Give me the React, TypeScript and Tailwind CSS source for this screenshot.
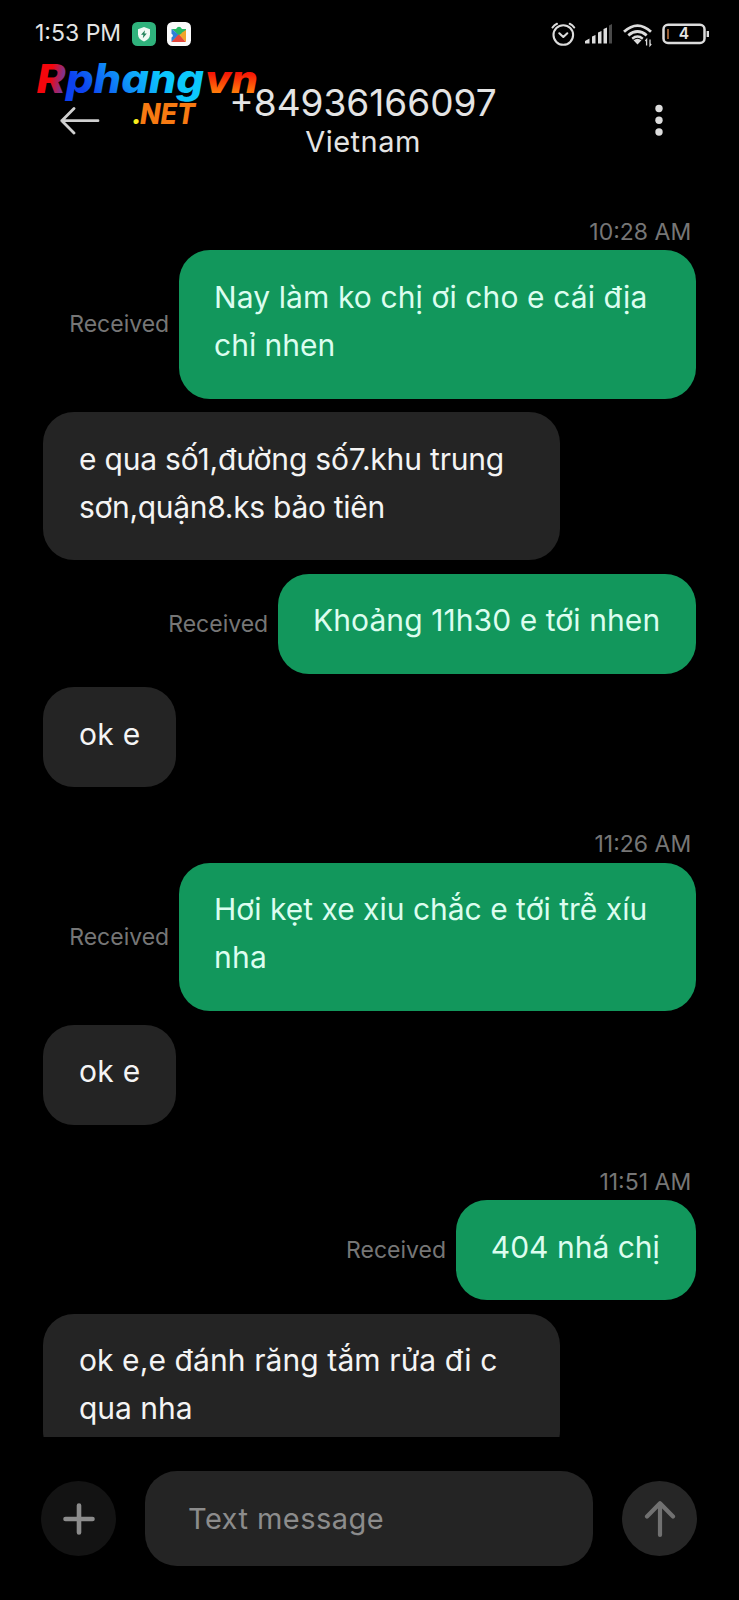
import type { ReactNode } from "react";

function StatusBar() {
  return (
    <div className="flex h-[67px] shrink-0 items-center pl-[35px] pr-[30.500px]">
      <span className="w-[97px] shrink-0 whitespace-nowrap text-[23px] text-[#e4e4e4]">1:53 PM</span>
      <svg width="24" height="24" viewBox="0 0 24 24" className="shrink-0">
        <rect width="24" height="24" rx="5.5" fill="#2fb27c" />
        <path d="M12 5l6 2.2v5.3c0 3.2-2.4 5.6-6 7-3.600-1.400-6-3.800-6-7V7.200z" fill="#f0faf5" />
        <path d="M13 8.200l-4 4.600h2.400l-.6 3.400 4-4.700h-2.400z" fill="#23835b" />
      </svg>
      <svg width="24" height="24" viewBox="0 0 24 24" className="ml-[10.500px] shrink-0">
        <rect width="24" height="24" rx="5.500" fill="#fafafa" />
        <path d="M4.500 7h5.200a2.300 2.300 0 1 1 4.600 0h4.700v5l-7 1z" fill="#25b865" />
        <path d="M4.500 7l7.500 5.700-7.500 7.300v-4.500a2 2 0 0 0 0-3.800z" fill="#2f80d8" />
        <path d="M4.500 20l7.500-8 7 8z" fill="#e5473d" />
        <path d="M19 8v12l-7-7.500z" fill="#f0a429" />
        <path d="M9.500 6h5v5.500l-2.500 1.500-2.500-2z" fill="#25b865" />
      </svg>
      <div className="grow" />
      <svg width="160" height="32" viewBox="548 17 160 32" className="shrink-0" fill="none">
        <g stroke="#dcdcdc" strokeWidth="2.100" strokeLinecap="round" strokeLinejoin="round">
          <circle cx="562.300" cy="34" r="9.800" />
          <path d="M558.300 32.300l4 3.700 4-3.700" />
          <path d="M551.500 26.500q1.800-2.600 4.500-3.700M573.200 26.500q-1.800-2.600-4.500-3.700" />
        </g>
        <g fill="#dcdcdc">
          <path d="M584 42.500v-2.500l4.500-2.500v5zM591 35.500l3.500-1.500v8.500h-3.500zM597 31.500l3.500-1.500v12.500h-3.500zM602.500 28l3.500-1.500v16h-3.500z" />
          <path d="M608 24.500l3-1.500v19.500h-3z" fill="#4a4a4a" />
          <path d="M636.500 43.500l-4-4.200q4-3 8 0z" />
        </g>
        <g stroke="#dcdcdc" strokeWidth="2.800">
          <path d="M623 30.800q13.500-12.400 27 0" />
          <path d="M627.300 34.300q9.200-7.600 18.400 0" />
          <path d="M631.200 37.700q5.300-4.200 10.600 0" strokeWidth="2.400" />
          <path d="M645.600 44.500v-6l-1.200 1.500M649 38.500v6l1.200-1.500" strokeWidth="1.300" />
        </g>
        <rect x="662.500" y="23.700" width="41" height="18.300" rx="4.500" stroke="#dcdcdc" strokeWidth="2.500" />
        <path d="M667 28v10" stroke="#a5663a" strokeWidth="1.800" />
        <path d="M706.800 30v6" stroke="#dcdcdc" strokeWidth="2.400" />
        <text x="683" y="38.400" textAnchor="middle" fill="#e4e4e4" fontSize="15.500" fontWeight="600">4</text>
      </svg>
    </div>
  );
}

function Logo() {
  return (
    <svg className="absolute left-7 top-12 overflow-visible" width="236" height="84" viewBox="28 48 236 84" fontWeight="800" fontStyle="italic">
      <defs>
        <linearGradient id="lead" x1="0" y1="0" x2="1" y2="0.300">
          <stop offset="0.550" stopColor="#f5060c" />
          <stop offset="1" stopColor="#6a3aa8" />
        </linearGradient>
        <linearGradient id="mid" x1="0" y1="0.300" x2="1" y2="0">
          <stop offset="0" stopColor="#0d42f0" />
          <stop offset="0.400" stopColor="#0fa5fa" />
          <stop offset="0.600" stopColor="#0cc8fc" />
        </linearGradient>
        <linearGradient id="tail" x1="0" y1="0" x2="0" y2="1">
          <stop offset="0.350" stopColor="#f50a05" />
          <stop offset="0.800" stopColor="#ff7a0a" />
        </linearGradient>
      </defs>
      <text x="36.500" y="92.500" fontSize="40" textLength="29" lengthAdjust="spacingAndGlyphs" fill="url(#lead)">R</text>
      <text x="66" y="92.500" fontSize="40.500" textLength="138" lengthAdjust="spacingAndGlyphs" fill="url(#mid)">phang</text>
      <text x="205" y="92.500" fontSize="39" textLength="53" lengthAdjust="spacingAndGlyphs" fill="url(#tail)">vn</text>
      <text x="132" y="123.500" fontSize="28" fill="#f8ee1c">.</text>
      <text x="140" y="123.500" fontSize="28" textLength="55" lengthAdjust="spacingAndGlyphs" fill="#f77a12">NET</text>
    </svg>
  );
}

function Header() {
  return (
    <header className="flex h-[108px] shrink-0 items-start justify-between pl-[60px] pr-[74px] text-[#e4e4e4]">
      <svg width="40" height="28" viewBox="0 0 40 28" className="mt-[40px]" fill="none" stroke="#d0d0d0" strokeWidth="2.800" strokeLinecap="round" strokeLinejoin="round">
        <path d="M38 13.700H1.800M14 1.500L1.800 13.700 14 26" />
      </svg>
      <div className="flex flex-col items-center pr-[27px] pt-[13.500px]">
        <h1 className="text-[37px] leading-[44px]">+84936166097</h1>
        <p className="text-[29px] leading-[33px] tracking-[0.500px]">Vietnam</p>
      </div>
      <svg width="12" height="32" viewBox="0 0 12 32" className="mt-[37px]" fill="#dcdcdc">
        <circle cx="6" cy="4.500" r="3.700" />
        <circle cx="6" cy="16.300" r="3.700" />
        <circle cx="6" cy="28" r="3.700" />
      </svg>
    </header>
  );
}

function Time({ children }: { children: ReactNode }) {
  return (
    <div className="flex h-[75.400px] shrink-0 items-end justify-end pb-[3.500px] pr-[4.500px] text-[23px] leading-[30px] text-[#767676]">
      {children}
    </div>
  );
}

function Sent({ className, children }: { className: string; children: ReactNode }) {
  return (
    <div className="flex items-center justify-end gap-[9.500px]">
      <span className="text-[23px] text-[#767676]">Received</span>
      <div className={"rounded-[31px] bg-[#12975c] pl-[35.300px] pt-[22.500px] text-[#dcfdef] " + className}>{children}</div>
    </div>
  );
}

function Got({ className, children }: { className: string; children: ReactNode }) {
  return <div className={"shrink-0 rounded-[31px] bg-[#242424] pl-[35.700px] pt-[22.500px] text-[#f4f4f4] " + className}>{children}</div>;
}

function Line({ className = "", children }: { className?: string; children: ReactNode }) {
  return <p className={"whitespace-nowrap text-[30px] leading-[48px] " + className}>{children}</p>;
}

export default function App() {
  return (
    <div className="relative flex h-[1600px] w-[739px] flex-col overflow-hidden bg-black font-['Inter',sans-serif]">
      <StatusBar />
      <Header />
      <Logo />
      <main className="flex h-[1262px] shrink-0 flex-col overflow-hidden pl-[43.200px] pr-[43.300px]">
        <Time>10:28 AM</Time>
        <div className="flex shrink-0 flex-col gap-[13.300px]">
          <Sent className="h-[148.400px] w-[517px]">
            <Line className="tracking-[0.100px]">Nay làm ko chị ơi cho e cái địa</Line>
            <Line>chỉ nhen</Line>
          </Sent>
          <Got className="h-[148.400px] w-[517px]">
            <Line className="tracking-[-0.180px]">e qua số1,đường số7.khu trung</Line>
            <Line className="tracking-[-0.300px]">sơn,quận8.ks bảo tiên</Line>
          </Got>
          <Sent className="h-[100.200px] w-[418px]">
            <Line className="tracking-[0.080px]">Khoảng 11h30 e tới nhen</Line>
          </Sent>
          <Got className="h-[100.200px] w-[132.500px]">
            <Line className="tracking-[0.350px]">ok e</Line>
          </Got>
        </div>
        <Time>11:26 AM</Time>
        <div className="flex shrink-0 flex-col gap-[13.300px]">
          <Sent className="h-[148.400px] w-[517px]">
            <Line>Hơi kẹt xe xiu chắc e tới trễ xíu</Line>
            <Line className="tracking-[0.300px]">nha</Line>
          </Sent>
          <Got className="h-[100.200px] w-[132.500px]">
            <Line className="tracking-[0.350px]">ok e</Line>
          </Got>
        </div>
        <Time>11:51 AM</Time>
        <div className="flex shrink-0 flex-col gap-[13.300px]">
          <Sent className="h-[100.200px] w-[240.200px]">
            <Line>404 nhá chị</Line>
          </Sent>
          <Got className="h-[148.400px] w-[517px]">
            <Line className="tracking-[0.100px]">ok e,e đánh răng tắm rửa đi c</Line>
            <Line>qua nha</Line>
          </Got>
        </div>
      </main>
      <footer className="flex h-[163px] shrink-0 items-center pl-[41px] pr-[42px]">
        <button className="flex size-[75px] shrink-0 items-center justify-center rounded-full bg-[#131313]">
          <svg width="36" height="36" viewBox="0 0 36 36" stroke="#8c8c8c" strokeWidth="4.600" strokeLinecap="round">
            <path d="M18 4.500v27M4.500 18h27" />
          </svg>
        </button>
        <div className="ml-[29px] flex h-[95px] w-[448px] shrink-0 items-center rounded-[32px] bg-[#242424] pl-[43px] pt-px text-[29px] tracking-[0.450px] text-[#8c8c8c]">
          Text message
        </div>
        <button className="ml-[29px] flex size-[75px] shrink-0 items-center justify-center rounded-full bg-[#262626]">
          <svg width="36" height="40" viewBox="0 0 36 40" fill="none" stroke="#717171" strokeWidth="4.200" strokeLinecap="round" strokeLinejoin="round">
            <path d="M18 36V4.300M5 17.500L18 4.300l13 13.200" />
          </svg>
        </button>
      </footer>
    </div>
  );
}
